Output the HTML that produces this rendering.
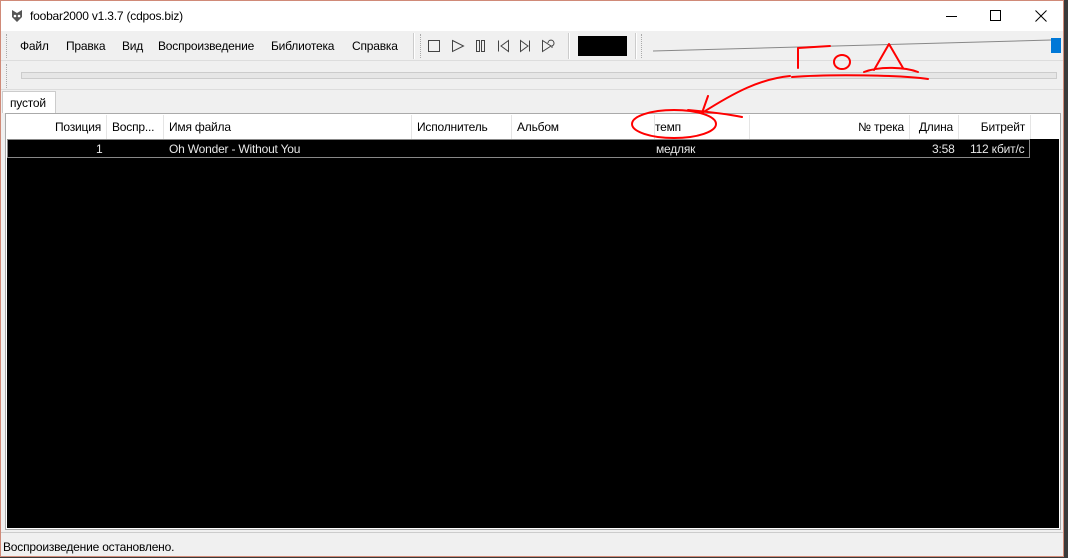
<!DOCTYPE html>
<html><head><meta charset="utf-8"><style>
*{margin:0;padding:0;box-sizing:border-box}
body{width:1068px;height:558px;background:#3a3a3a;position:relative;overflow:hidden;font-family:"Liberation Sans","DejaVu Sans",sans-serif;font-size:12px;color:#000;letter-spacing:-0.2px}
.win{position:absolute;left:0;top:0;width:1064px;height:557px;background:#f0f0f0;border:1px solid #d08a78}
.title{position:absolute;left:0;top:0;width:1062px;height:30px;background:#fff}
.abs{position:absolute}
.menu span{position:absolute;top:38px;font-size:12px}
.hdr{position:absolute;top:114px;height:24px;background:#fff;font-size:12px}
.hdr div{position:absolute;top:0;height:24px;line-height:24px;border-right:1px solid #e5e5e5;padding:0 5px}
.row div{position:absolute;top:139px;line-height:18px;color:#e8e8e8;font-size:12px}
</style></head><body>
<div class="win">
<div class="title">
<svg class="abs" style="left:9px;top:8px" width="14" height="14" viewBox="0 0 14 14"><path d="M2 1 L7 4 L12 1 L12 8 L7 13 L2 8Z" fill="#555"/><circle cx="5" cy="7" r="1.3" fill="#fff"/><circle cx="9" cy="7" r="1.3" fill="#fff"/></svg>
<div class="abs" style="left:29px;top:8px">foobar2000 v1.3.7 (cdpos.biz)</div>
<div class="abs" style="left:945px;top:15px;width:11px;height:1px;background:#000"></div>
<div class="abs" style="left:989px;top:9px;width:11px;height:11px;border:1px solid #000"></div>
<svg class="abs" style="left:1034px;top:9px" width="12" height="12"><path d="M0.5 0.5L11.5 11.5M11.5 0.5L0.5 11.5" stroke="#000"/></svg>
</div>
<div class="abs" style="left:0;top:30px;width:1062px;height:30px;background:#f0f0f0;border-bottom:1px solid #ddd"></div>
<div class="abs" style="left:5px;top:33px;height:24px;border-left:1px dotted #aaa"></div>
<div class="menu"><span style="left:19px">Файл</span><span style="left:65px">Правка</span><span style="left:121px">Вид</span><span style="left:157px">Воспроизведение</span><span style="left:270px">Библиотека</span><span style="left:351px">Справка</span></div>
<div class="abs" style="left:412px;top:32px;height:26px;border-left:1px solid #ccc;border-right:1px solid #fff"></div>
<div class="abs" style="left:419px;top:33px;height:24px;border-left:1px dotted #aaa"></div>
<svg class="abs" style="left:426px;top:38px" width="135" height="14" fill="none" stroke="#444">
<rect x="1.5" y="1.5" width="11" height="11"/>
<path d="M25.5 1.5L36.5 7L25.5 12.5Z"/>
<rect x="49.5" y="1.5" width="3" height="11"/><rect x="54.5" y="1.5" width="3" height="11"/>
<path d="M71.5 1.5V12.5M81.5 1.5L74 7L81.5 12.5Z"/>
<path d="M102.5 1.5V12.5M93.5 1.5L101 7L93.5 12.5Z"/>
<path d="M115.5 1.5L124 7L115.5 12.5Z M121 4a3 3 0 1 1 4 3v2"/>
</svg>
<div class="abs" style="left:567px;top:32px;height:26px;border-left:1px solid #ccc;border-right:1px solid #fff"></div>
<div class="abs" style="left:577px;top:35px;width:49px;height:20px;background:#000"></div>
<div class="abs" style="left:634px;top:32px;height:26px;border-left:1px solid #ccc;border-right:1px solid #fff"></div>
<div class="abs" style="left:640px;top:33px;height:24px;border-left:1px dotted #aaa"></div>
<svg class="abs" style="left:650px;top:36px" width="412" height="20"><path d="M2 14L400 3" stroke="#888"/><rect x="400" y="1" width="10" height="15" fill="#0078d7"/></svg>
<div class="abs" style="left:5px;top:63px;height:24px;border-left:1px dotted #aaa"></div>
<div class="abs" style="left:20px;top:71px;width:1036px;height:7px;background:#e6e6e6;border:1px solid #ccc"></div>
<div class="abs" style="left:0;top:88px;width:1062px;border-top:1px solid #ddd"></div>
<div class="abs" style="left:1px;top:90px;width:54px;height:22px;background:#fff;border:1px solid #ccc;border-bottom:none;padding:4px 0 0 7px">пустой</div>
<div class="abs" style="left:4px;top:112px;width:1056px;height:417px;background:#fff;border:1px solid #aaa"></div>
<div class="abs" style="left:6px;top:137px;width:1052px;height:390px;background:#000"></div>
<div class="hdr" style="left:6px;width:1052px">
<div style="left:0;width:100px;text-align:right">Позиция</div>
<div style="left:100px;width:57px">Воспр...</div>
<div style="left:157px;width:248px">Имя файла</div>
<div style="left:405px;width:100px">Исполнитель</div>
<div style="left:505px;width:143px">Альбом</div>
<div style="left:643px;width:100px">темп</div>
<div style="left:743px;width:160px;text-align:right">№ трека</div>
<div style="left:903px;width:49px;text-align:right">Длина</div>
<div style="left:952px;width:72px;text-align:right">Битрейт</div>
</div>
<div class="abs" style="left:6px;top:138px;width:1023px;height:19px;border:1px solid #888"></div>
<div class="row">
<div style="left:95px">1</div>
<div style="left:168px">Oh Wonder - Without You</div>
<div style="left:655px">медляк</div>
<div style="left:931px">3:58</div>
<div style="left:969px">112 кбит/с</div>
</div>
<div class="abs" style="left:0;top:531px;width:1062px;border-top:1px solid #ccc"></div>
<div class="abs" style="left:2px;top:539px">Воспроизведение остановлено.</div>
</div>
<svg class="abs" style="left:0;top:0" width="1068" height="558" fill="none" stroke="#f00" stroke-width="2" stroke-linecap="round" stroke-linejoin="round">
<path d="M798 68V48L830 46"/>
<ellipse cx="842" cy="62" rx="8" ry="7"/>
<path d="M874 70L889 44L903 68M864 72C880 66 905 67 918 72"/>
<path d="M792 77C830 74 900 75 928 79"/>
<path d="M790 76C760 79 735 92 702 113M708 96L702 113M688 110C710 112 728 114 742 117"/>
<ellipse cx="674" cy="124" rx="42" ry="14"/>
</svg>
</body></html>
